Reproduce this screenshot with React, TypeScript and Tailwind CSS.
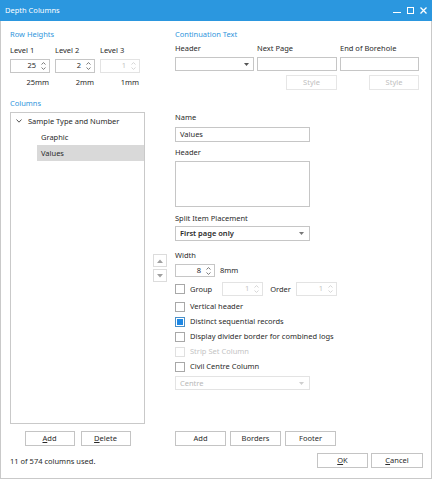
import React from "react";

const Up = ({ c = "#6b6b6b" }: { c?: string }) => (
  <svg width="5" height="3" viewBox="0 0 5 3" className="block">
    <path d="M0.5 2.5 L2.5 0.6 L4.5 2.5" fill="none" stroke={c} strokeWidth="0.9" />
  </svg>
);
const Down = ({ c = "#6b6b6b" }: { c?: string }) => (
  <svg width="5" height="3" viewBox="0 0 5 3" className="block">
    <path d="M0.5 0.5 L2.5 2.4 L4.5 0.5" fill="none" stroke={c} strokeWidth="0.9" />
  </svg>
);

function Spin({ value, disabled, w }: { value: string; disabled?: boolean; w: string }) {
  return (
    <div
      className={`${w} flex items-center justify-end border ${
        disabled ? "border-[#e3e3e3] text-[#c4c4c4]" : "border-[#c6c6c6] text-[#2a2a2a]"
      } bg-white`}
    >
      <span className="leading-none">{value}</span>
      <div className="flex flex-col gap-[2px] ml-[5px] mr-[3px]">
        <Up c={disabled ? "#d0d0d0" : "#6b6b6b"} />
        <Down c={disabled ? "#d0d0d0" : "#6b6b6b"} />
      </div>
    </div>
  );
}

const Caret = ({ c = "#555" }: { c?: string }) => (
  <svg width="5" height="3" viewBox="0 0 5 3" className="block">
    <path d="M0 0 L5 0 L2.5 3 Z" fill={c} />
  </svg>
);

function Check({ label, checked, disabled }: { label: string; checked?: boolean; disabled?: boolean }) {
  return (
    <div className={`h-[15px] flex items-center ${disabled ? "text-[#c4c4c4]" : ""}`}>
      <div
        className={`w-[10px] h-[10px] border flex items-center justify-center bg-white ${
          disabled ? "border-[#e0e0e0]" : checked ? "border-[#4a90c8]" : "border-[#a8a8a8]"
        }`}
      >
        {checked && <div className="w-[6px] h-[6px] bg-[#1e88e5]" />}
      </div>
      <span className="ml-[5px]">{label}</span>
    </div>
  );
}

function Btn({ children, w, disabled }: { children: React.ReactNode; w: string; disabled?: boolean }) {
  return (
    <div
      className={`${w} h-[15px] border flex items-center justify-center bg-white ${
        disabled ? "border-[#e6e6e6] text-[#c0c0c0]" : "border-[#c4c4c4] text-[#2a2a2a]"
      }`}
    >
      {children}
    </div>
  );
}

export default function App() {
  return (
    <div className="w-[432px] h-[479px] bg-white flex flex-col font-['Noto_Sans',sans-serif] text-[7.5px] leading-[11px] text-[#2a2a2a]">
      {/* title bar */}
      <div className="h-[21px] bg-[#2b97df] flex items-center pl-[5px] pr-[5px] text-white">
        <span className="text-[7.5px]">Depth Columns</span>
        <div className="ml-auto flex items-center gap-[6px]">
          <div className="w-[8px] h-[9px] flex items-end pb-[2px]">
            <div className="w-[8px] h-[1.5px] bg-white" />
          </div>
          <div className="w-[7px] h-[7px] border-[1.5px] border-white" />
          <svg width="7" height="7" viewBox="0 0 7 7">
            <path d="M0.5 0.5 L6.5 6.5 M6.5 0.5 L0.5 6.5" stroke="white" strokeWidth="1.3" />
          </svg>
        </div>
      </div>

      {/* body */}
      <div className="flex-1 border-x border-b border-[#c9c9c9] flex flex-col pl-[9px] pr-[11px]">
        {/* top section */}
        <div className="flex mt-[8px]">
          <div className="w-[165px] flex flex-col">
            <div className="h-[11px] text-[#2f95dc]">Row Heights</div>
            <div className="flex gap-[5px] mt-[5px]">
              {[
                { l: "Level 1", v: "25", mm: "25mm" },
                { l: "Level 2", v: "2", mm: "2mm" },
                { l: "Level 3", v: "1", mm: "1mm", d: true },
              ].map((x) => (
                <div key={x.l} className="w-[40px] flex flex-col">
                  <div className="h-[11px]">{x.l}</div>
                  <div className="mt-[3px] h-[14px] flex">
                    <Spin value={x.v} disabled={x.d} w="w-[40px]" />
                  </div>
                  <div className="mt-[4px] h-[11px] text-right pr-[1px]">{x.mm}</div>
                </div>
              ))}
            </div>
          </div>
          <div className="flex-1 flex flex-col">
            <div className="h-[11px] text-[#2f95dc]">Continuation Text</div>
            <div className="grid grid-cols-[79px_80px_79px] gap-x-[3px] mt-[3px]">
              <div className="h-[11px]">Header</div>
              <div className="h-[11px]">Next Page</div>
              <div className="h-[11px]">End of Borehole</div>
              <div className="mt-[3px] h-[14px] border border-[#c6c6c6] flex items-center justify-end pr-[4px]">
                <Caret />
              </div>
              <div className="mt-[3px] h-[14px] border border-[#c6c6c6]" />
              <div className="mt-[3px] h-[14px] border border-[#c6c6c6]" />
              <div />
              <div className="mt-[4px] flex justify-end">
                <Btn w="w-[51px]" disabled>
                  Style
                </Btn>
              </div>
              <div className="mt-[4px] flex justify-end">
                <Btn w="w-[50px]" disabled>
                  Style
                </Btn>
              </div>
            </div>
          </div>
        </div>

        <div className="mt-[8px] h-[11px] text-[#2f95dc]">Columns</div>

        {/* main */}
        <div className="mt-[3px] flex h-[312px]">
          <div className="w-[135px] h-full border border-[#c9c9c9] flex flex-col">
            <div className="h-[16px] flex items-center">
              <svg width="6" height="4" viewBox="0 0 6 4" className="ml-[5px]">
                <path d="M0.5 0.5 L3 3.2 L5.5 0.5" fill="none" stroke="#444" strokeWidth="0.9" />
              </svg>
              <span className="ml-[6px]">Sample Type and Number</span>
            </div>
            <div className="h-[16px] flex items-center pl-[30px]">Graphic</div>
            <div className="h-[16px] flex items-center ml-[26px] pl-[4px] bg-[#d9d9d9]">Values</div>
          </div>

          <div className="w-[14px] ml-[8px] flex flex-col justify-center gap-[2px]">
            <div className="h-[13px] border border-[#dcdcdc] flex items-center justify-center">
              <svg width="6" height="4" viewBox="0 0 6 4">
                <path d="M0 4 L3 0.5 L6 4 Z" fill="#a0a0a0" />
              </svg>
            </div>
            <div className="h-[13px] border border-[#dcdcdc] flex items-center justify-center">
              <svg width="6" height="4" viewBox="0 0 6 4">
                <path d="M0 0 L6 0 L3 3.5 Z" fill="#a0a0a0" />
              </svg>
            </div>
          </div>

          <div className="ml-[8px] flex flex-col w-[160px]">
            <div className="h-[11px]">Name</div>
            <div className="mt-[4px] w-[135px] h-[15px] border border-[#c6c6c6] flex items-center pl-[4px]">
              Values
            </div>
            <div className="mt-[5px] h-[11px]">Header</div>
            <div className="mt-[3px] w-[135px] h-[46px] border border-[#c6c6c6]" />
            <div className="mt-[6px] h-[11px]">Split Item Placement</div>
            <div className="mt-[2px] w-[135px] h-[15px] border border-[#c6c6c6] flex items-center pl-[4px] pr-[5px] font-semibold">
              <span>First page only</span>
              <span className="ml-auto">
                <Caret c="#777" />
              </span>
            </div>
            <div className="mt-[9px] h-[11px]">Width</div>
            <div className="mt-[3px] h-[13px] flex items-center">
              <div className="h-[13px] flex">
                <Spin value="8" w="w-[40px]" />
              </div>
              <span className="ml-[5px]">8mm</span>
            </div>
            <div className="mt-[5px] h-[14px] flex items-center">
              <Check label="Group" />
              <div className="ml-[10px] h-[14px] flex">
                <Spin value="1" disabled w="w-[41px]" />
              </div>
              <span className="ml-[7px]">Order</span>
              <div className="ml-[5px] h-[14px] flex">
                <Spin value="1" disabled w="w-[41px]" />
              </div>
            </div>
            <div className="mt-[3px] flex flex-col">
              <Check label="Vertical header" />
              <Check label="Distinct sequential records" checked />
              <Check label="Display divider border for combined logs" />
              <Check label="Strip Set Column" disabled />
              <Check label="Civil Centre Column" />
            </div>
            <div className="mt-[2px] w-[135px] h-[14px] border border-[#e3e3e3] flex items-center pl-[4px] pr-[5px] text-[#b8b8b8]">
              <span>Centre</span>
              <span className="ml-auto">
                <Caret c="#cfcfcf" />
              </span>
            </div>
          </div>
        </div>

        {/* bottom buttons */}
        <div className="mt-[7px] flex">
          <div className="w-[135px] flex justify-center gap-[6px]">
            <Btn w="w-[50px]">
              <span>
                <span className="underline">A</span>dd
              </span>
            </Btn>
            <Btn w="w-[50px]">
              <span>
                <span className="underline">D</span>elete
              </span>
            </Btn>
          </div>
          <div className="ml-[30px] flex gap-[4px]">
            <Btn w="w-[51px]">Add</Btn>
            <Btn w="w-[51px]">Borders</Btn>
            <Btn w="w-[51px]">Footer</Btn>
          </div>
        </div>

        <div className="mt-[7px] flex items-center mr-[-3px]">
          <span className="mt-[1px]">11 of 574 columns used.</span>
          <div className="ml-auto flex gap-[3px]">
            <Btn w="w-[51px]">
              <span>
                <span className="underline">O</span>K
              </span>
            </Btn>
            <Btn w="w-[52px]">
              <span>
                <span className="underline">C</span>ancel
              </span>
            </Btn>
          </div>
        </div>
      </div>
    </div>
  );
}
